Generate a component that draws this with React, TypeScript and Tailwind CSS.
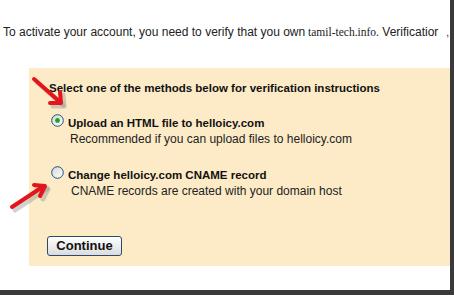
import React from "react";

function Radio({ checked }: { checked?: boolean }) {
  const id = checked ? "rg1" : "rg2";
  return (
    <svg width="13" height="13" viewBox="0 0 13 13" className="shrink-0">
      <defs>
        <linearGradient id={id} x1="0" y1="0" x2="1" y2="1">
          <stop offset="0" stopColor="#d6d6d0" />
          <stop offset="1" stopColor="#ffffff" />
        </linearGradient>
      </defs>
      <circle cx="6.5" cy="6.5" r="5.8" fill={`url(#${id})`} stroke="#1c5180" strokeWidth="1" />
      {checked && <circle cx="6.5" cy="6.5" r="2.4" fill="#21a121" />}
    </svg>
  );
}

function Arrow({ d, head }: { d: string; head: string }) {
  return (
    <g>
      <g transform="translate(3,3)" stroke="#9a9a9a" strokeOpacity="0.45" strokeWidth="5" fill="none" strokeLinecap="round" strokeLinejoin="round">
        <path d={d} />
        <path d={head} />
      </g>
      <g stroke="#e3141a" strokeWidth="4" fill="none" strokeLinecap="round" strokeLinejoin="round">
        <path d={d} />
        <path d={head} />
      </g>
    </g>
  );
}

export default function App() {
  return (
    <div
      className="relative w-[454px] h-[295px] bg-white overflow-hidden border-r-[4px] border-b-[5px] border-[#3a3a3a]"
      style={{ fontFamily: '"Liberation Sans", Arial, sans-serif' }}
    >
      <div className="pt-[23px] pl-[3px] h-[68px] text-[12px] leading-[18px] text-[#222] whitespace-nowrap">
        To activate your account, you need to verify that you own
        <span className="text-[11.5px]" style={{ fontFamily: '"Liberation Serif", serif' }}>
          {" "}tamil-tech.info.
        </span>{" "}
        Verificatior
        <span className="ml-[8px] text-[10px]">,</span>
      </div>

      <div className="ml-[29px] w-[421px] h-[198px] bg-[#fcebc6] pl-[20px] pt-[13px] text-[#111]">
        <div className="text-[11.5px] leading-[15px] font-bold whitespace-nowrap">
          Select one of the methods below for verification instructions
        </div>

        <div className="mt-[19px] flex items-start gap-[4px]">
          <div className="-mt-[1px] ml-[2px]">
            <Radio checked />
          </div>
          <div>
            <div className="text-[11.5px] leading-[16px] font-bold">Upload an HTML file to helloicy.com</div>
            <div className="text-[12px] leading-[16px] pl-[2px] text-[#222]">
              Recommended if you can upload files to helloicy.com
            </div>
          </div>
        </div>

        <div className="mt-[20px] flex items-start gap-[4px]">
          <div className="-mt-[1px] ml-[2px]">
            <Radio />
          </div>
          <div>
            <div className="text-[11.5px] leading-[16px] font-bold">Change helloicy.com CNAME record</div>
            <div className="text-[12px] leading-[16px] pl-[3px] text-[#222]">
              CNAME records are created with your domain host
            </div>
          </div>
        </div>

        <button className="mt-[37px] -ml-[2px] w-[75px] h-[20px] rounded-[3px] border border-[#2c4a6a] bg-gradient-to-b from-[#ffffff] to-[#dcdcdc] text-[13px] font-bold leading-[16px] text-[#111]">
          Continue
        </button>
      </div>

      <svg className="absolute left-0 top-0 pointer-events-none" width="454" height="295">
        <Arrow d="M34 79 L60 102" head="M50 103 L61 103 L60 92" />
        <Arrow d="M12 207 L44 186" head="M34 185 L45 186 L40 196" />
      </svg>
    </div>
  );
}
